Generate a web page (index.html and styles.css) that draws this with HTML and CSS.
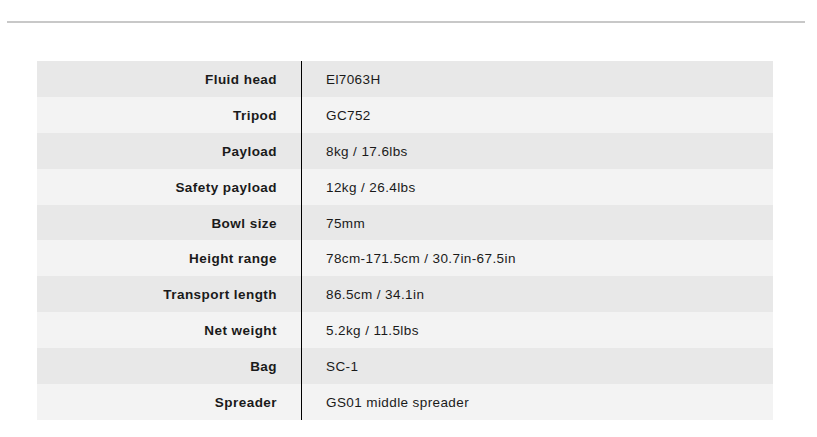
FILE: index.html
```html
<!DOCTYPE html>
<html>
<head>
<meta charset="utf-8">
<link rel="stylesheet" href="styles.css">
</head>
<body>
<div class="rule"></div>
<div class="specs">
  <div class="row"><div class="label">Fluid head</div><div class="value">El7063H</div></div>
  <div class="row"><div class="label">Tripod</div><div class="value">GC752</div></div>
  <div class="row"><div class="label">Payload</div><div class="value">8kg / 17.6lbs</div></div>
  <div class="row"><div class="label">Safety payload</div><div class="value">12kg / 26.4lbs</div></div>
  <div class="row"><div class="label">Bowl size</div><div class="value">75mm</div></div>
  <div class="row"><div class="label">Height range</div><div class="value">78cm-171.5cm / 30.7in-67.5in</div></div>
  <div class="row"><div class="label">Transport length</div><div class="value">86.5cm / 34.1in</div></div>
  <div class="row"><div class="label">Net weight</div><div class="value">5.2kg / 11.5lbs</div></div>
  <div class="row"><div class="label">Bag</div><div class="value">SC-1</div></div>
  <div class="row"><div class="label">Spreader</div><div class="value">GS01 middle spreader</div></div>
</div>
</body>
</html>
```
FILE: styles.css
```css
html, body {
  margin: 0;
  padding: 0;
  background: #ffffff;
}
body {
  font-family: "Liberation Sans", Arial, sans-serif;
  font-size: 13.5px;
  color: #1a1a1a;
}
.rule {
  height: 2px;
  margin: 21px 12px 0 7px;
  background: #c8c8c8;
}
.specs {
  margin: 38px 0 0 37px;
  width: 736px;
  display: flex;
  flex-direction: column;
}
.row {
  display: grid;
  grid-template-columns: 264px 1fr;
  height: 35.9px;
  background: #e8e8e8;
}
.row:nth-child(even) {
  background: #f3f3f3;
}
.label {
  display: flex;
  align-items: center;
  justify-content: flex-end;
  padding: 1px 24px 0 0;
  font-weight: bold;
  letter-spacing: 0.45px;
  border-right: 1px solid #000;
  margin-right: -1px;
}
.value {
  display: flex;
  align-items: center;
  padding: 1px 0 0 25px;
  letter-spacing: 0.4px;
}
```
